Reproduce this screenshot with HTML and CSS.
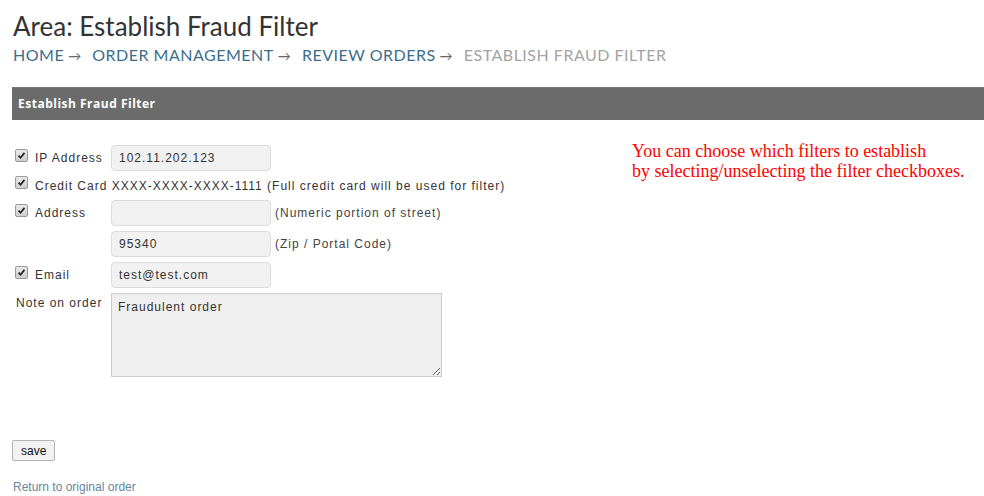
FILE: index.html
```html
<!DOCTYPE html>
<html>
<head>
<meta charset="utf-8">
<link rel="stylesheet" href="styles.css">
</head>
<body>
<header class="page-head">
  <h1 class="area-title">Area: Establish Fraud Filter</h1>
  <nav class="crumbs">
    <a href="#">HOME</a><span class="sep">&rarr;</span>
    <a href="#">ORDER MANAGEMENT</a><span class="sep">&rarr;</span>
    <a href="#">REVIEW ORDERS</a><span class="sep">&rarr;</span>
    <span class="current">ESTABLISH FRAUD FILTER</span>
  </nav>
</header>

<section class="panel">
  <div class="panel-bar">Establish Fraud Filter</div>
  <div class="panel-body">
    <form class="filter-form">
      <div class="row">
        <label class="lbl"><span class="cb"><svg viewBox="0 0 13 13"><path d="M3 6.6 L5.4 9.2 L10 3.4" /></svg></span>IP Address</label>
        <input class="field" type="text" value="102.11.202.123">
      </div>
      <div class="row row-cc">
        <label class="lbl lbl-auto"><span class="cb"><svg viewBox="0 0 13 13"><path d="M3 6.6 L5.4 9.2 L10 3.4" /></svg></span>Credit Card XXXX-XXXX-XXXX-1111 (Full credit card will be used for filter)</label>
      </div>
      <div class="row">
        <label class="lbl"><span class="cb"><svg viewBox="0 0 13 13"><path d="M3 6.6 L5.4 9.2 L10 3.4" /></svg></span>Address</label>
        <input class="field" type="text" value="">
        <span class="hint">(Numeric portion of street)</span>
      </div>
      <div class="row">
        <span class="lbl"></span>
        <input class="field" type="text" value="95340">
        <span class="hint">(Zip / Portal Code)</span>
      </div>
      <div class="row">
        <label class="lbl"><span class="cb"><svg viewBox="0 0 13 13"><path d="M3 6.6 L5.4 9.2 L10 3.4" /></svg></span>Email</label>
        <input class="field" type="text" value="test@test.com">
      </div>
      <div class="row row-top">
        <label class="lbl lbl-note">Note on order</label>
        <textarea class="note">Fraudulent order</textarea>
      </div>
      <div class="actions">
        <button type="button" class="save">save</button>
      </div>
      <a class="return" href="#">Return to original order</a>
    </form>
    <p class="tip">You can choose which filters to establish<br>by selecting/unselecting the filter checkboxes.</p>
  </div>
</section>
</body>
</html>
```
FILE: styles.css
```css
html, body { margin: 0; padding: 0; background: #fff; }
body { padding: 0 0 0 12px; font-family: "Liberation Sans", Arial, sans-serif; }

.page-head { padding-top: 10px; }
.area-title {
  margin: 0 0 0 1px;
  font-family: Lato, "Open Sans", sans-serif;
  font-weight: 400;
  font-size: 26px;
  line-height: 32px;
  color: #333;
}
.crumbs {
  margin: 2px 0 0 1px;
  font-family: Lato, "Open Sans", sans-serif;
  font-size: 16px;
  line-height: 22px;
  letter-spacing: 0.5px;
  color: #999;
}
.crumbs a { color: #3c6e8c; text-decoration: none; }
.crumbs .sep { color: #666; margin: 0 6px 0 4px; font-size: 13px; }
.crumbs .current { color: #a3a3a3; }

.panel { margin-top: 20px; }
.panel-bar {
  background: #6b6b6b;
  color: #fff;
  font-family: "Open Sans", sans-serif;
  font-weight: 700;
  font-size: 12px;
  letter-spacing: 0.5px;
  height: 33px;
  line-height: 31px;
  padding-left: 6px;
  border-top: 1px solid #777;
  box-sizing: border-box;
}
.panel-body { display: flex; padding-top: 25px; }

.filter-form { width: 620px; display: flex; flex-direction: column; gap: 5px; }
.row { display: flex; align-items: center; height: 26px; }
.row-cc { height: 19px; }
.row-top { align-items: flex-start; height: auto; }
.lbl {
  width: 95px;
  display: flex;
  align-items: center;
  padding-left: 4px;
  font-size: 12px;
  letter-spacing: 1px;
  color: #333;
  flex-shrink: 0;
}
.lbl-auto { width: auto; white-space: nowrap; }
.lbl-note { padding-top: 3px; }
.cb {
  width: 11px;
  height: 11px;
  margin-right: 6px;
  border: 1px solid #9a9a9a;
  border-radius: 2px;
  background: linear-gradient(#e8e8e8, #cfcfcf);
  display: inline-flex;
  flex-shrink: 0;
  position: relative;
  top: -3px;
  left: -1px;
}
.cb svg { width: 11px; height: 11px; }
.cb path { fill: none; stroke: #222; stroke-width: 2; }

.field {
  width: 160px;
  height: 26px;
  box-sizing: border-box;
  border: 1px solid #dcdcdc;
  border-radius: 4px;
  background: #f1f1f1;
  padding: 0 7px;
  font-family: "Liberation Sans", Arial, sans-serif;
  font-size: 12px;
  letter-spacing: 1px;
  color: #333;
  margin: 0;
}
.hint { margin-left: 4px; font-size: 12px; letter-spacing: 1px; color: #444; }
.note {
  width: 331px;
  height: 84px;
  box-sizing: border-box;
  border: 1px solid #ccc;
  background: #efefef;
  padding: 6px 6px;
  font-family: "Liberation Sans", Arial, sans-serif;
  font-size: 12px;
  letter-spacing: 1px;
  color: #333;
  margin: 0;
  resize: both;
}
.actions { margin-top: 58px; }
.save {
  font-family: "Liberation Sans", Arial, sans-serif;
  font-size: 12px;
  height: 21px;
  padding: 0 8px;
  background: #f2f2f2;
  border: 1px solid #b5b5b5;
  border-radius: 2px;
  color: #111;
}
.return {
  margin-top: 14px;
  margin-left: 1px;
  font-size: 12px;
  color: #6a86a0;
  text-decoration: none;
}
.tip {
  margin: -4px 0 0 0;
  font-family: "Liberation Serif", "Times New Roman", serif;
  font-size: 18px;
  line-height: 20px;
  color: #f00;
}
```
